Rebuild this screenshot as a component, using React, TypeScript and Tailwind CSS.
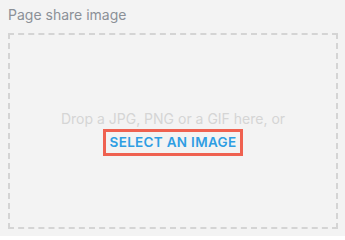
import React from "react";

export default function App() {
  return (
    <div
      className="w-[345px] h-[236px] bg-[#f3f3f3] px-2 pt-[5px] flex flex-col"
      style={{ fontFamily: "Inter, 'Noto Sans', sans-serif" }}
    >
      <div className="text-[14px] leading-[20px] text-[#8b9097] mb-[8px]">Page share image</div>
      <div className="w-[330px] h-[196px] border-2 border-dashed border-[#d4d4d4] flex flex-col items-center justify-center pt-[4px]">
        <div className="text-[14px] leading-[18px] text-[#d5d5d5]">Drop a JPG, PNG or a GIF here, or</div>
        <button className="mt-[1px] border-[3px] border-[#ef6150] px-[4px] h-[27px] text-[13.5px] font-semibold tracking-[0.3px] text-[#2e9ee3] leading-none">
          SELECT AN IMAGE
        </button>
      </div>
    </div>
  );
}
